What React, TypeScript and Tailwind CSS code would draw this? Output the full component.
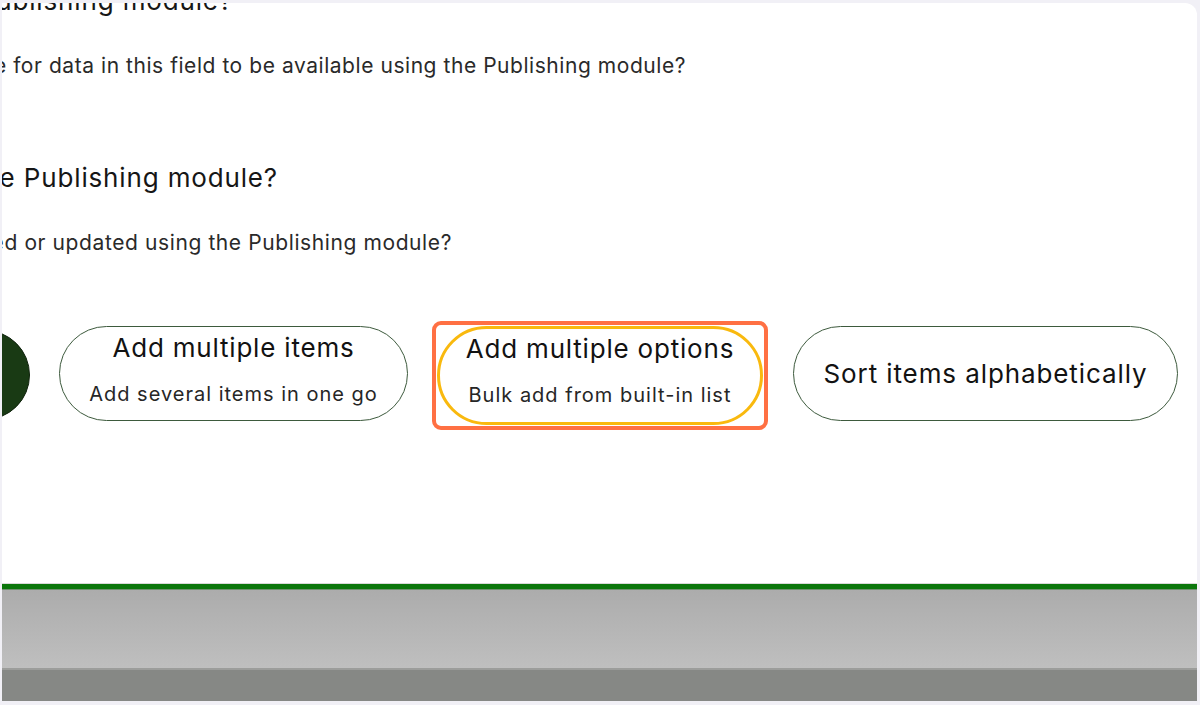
import React from "react";

const font = { fontFamily: "Inter, 'Noto Sans', sans-serif" };

export default function App() {
  return (
    <div
      className="w-[1200px] h-[705px] overflow-hidden bg-[#f1f0f6] pl-[2px] pr-[3px] pt-[3px] pb-[4px] flex flex-col"
      style={font}
    >
      <div className="flex-1 bg-white rounded-tr-[12px] overflow-hidden flex flex-col">
        <div className="flex justify-end whitespace-nowrap w-[231px] -mt-[18px] text-[26px] leading-[32px] tracking-[0.85px] text-[#161616]">
          <span>Is this field available in the Publishing module?</span>
        </div>
        <div className="flex justify-end whitespace-nowrap w-[684px] mt-[37px] text-[21px] leading-[24px] tracking-[0.55px] text-[#2a2a2a]">
          <span>Would it be possible for data in this field to be available using the Publishing module?</span>
        </div>
        <div className="flex justify-end whitespace-nowrap w-[276px] mt-[84px] text-[26px] leading-[32px] tracking-[0.85px] text-[#161616]">
          <span>Can items be updated in the Publishing module?</span>
        </div>
        <div className="flex justify-end whitespace-nowrap w-[450px] mt-[37px] text-[21px] leading-[24px] tracking-[0.6px] text-[#2a2a2a]">
          <span>Can items in this field be added or updated using the Publishing module?</span>
        </div>

        <div className="flex items-start mt-[66px]">
          <div className="shrink-0 w-[200px] h-[90px] -ml-[172px] mt-[9px] rounded-full bg-[#193a14] border border-[#0f220c]" />

          <button className="shrink-0 ml-[29px] mt-[5px] w-[349px] h-[95px] rounded-full border-[1.5px] border-[#3d5a3d] bg-white flex flex-col items-center">
            <span className="text-[26px] leading-[32px] tracking-[0.8px] text-[#121212] mt-[5px]">Add multiple items</span>
            <span className="text-[20px] leading-[26px] tracking-[1px] text-[#262626] mt-[17px]">Add several items in one go</span>
          </button>

          <div className="shrink-0 ml-[24px] w-[336px] h-[109px] rounded-[9px] border-[4px] border-[#ff7043] p-[1px] bg-white">
            <div className="w-full h-full rounded-full border-[3px] border-[#f9b90e] flex flex-col items-center">
              <span className="text-[26px] leading-[32px] tracking-[0.8px] text-[#121212] mt-[4px]">Add multiple options</span>
              <span className="text-[20px] leading-[26px] tracking-[1px] text-[#262626] mt-[17px]">Bulk add from built-in list</span>
            </div>
          </div>

          <button className="shrink-0 ml-[25px] mt-[5px] w-[385px] h-[95px] rounded-full border-[1.5px] border-[#3d5a3d] bg-white flex items-center justify-center">
            <span className="text-[26px] leading-[32px] tracking-[0.9px] text-[#121212]">Sort items alphabetically</span>
          </button>
        </div>
      </div>

      <div className="h-[1px] bg-[#d9d9d9]" />
      <div className="h-[5px] bg-[#0b760b]" />
      <div className="h-[1px] bg-[#6f8f6f]" />
      <div className="h-[78px] bg-gradient-to-b from-[#acacac] to-[#bfbfbf]" />
      <div className="h-[2px] bg-[#9c9d9b]" />
      <div className="h-[31px] bg-[#868885]" />
    </div>
  );
}
